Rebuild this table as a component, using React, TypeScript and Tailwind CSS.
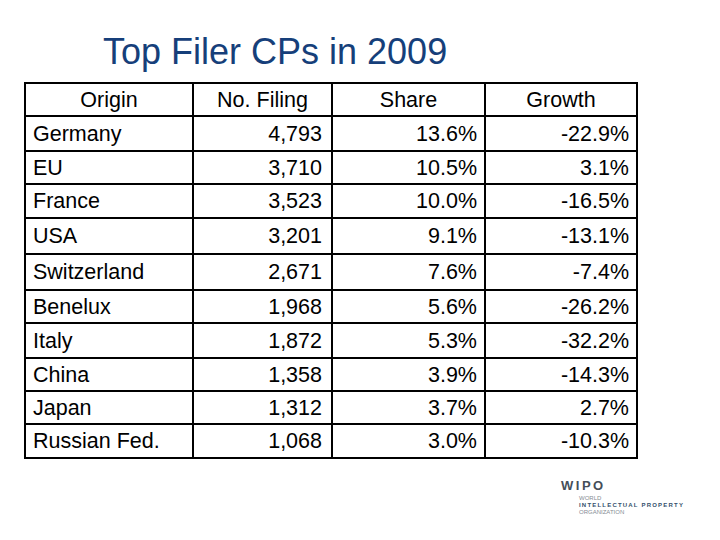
import { Fragment } from 'react'

const rows: [string, string, string, string][] = [
  ['Germany', '4,793', '13.6%', '-22.9%'],
  ['EU', '3,710', '10.5%', '3.1%'],
  ['France', '3,523', '10.0%', '-16.5%'],
  ['USA', '3,201', '9.1%', '-13.1%'],
  ['Switzerland', '2,671', '7.6%', '-7.4%'],
  ['Benelux', '1,968', '5.6%', '-26.2%'],
  ['Italy', '1,872', '5.3%', '-32.2%'],
  ['China', '1,358', '3.9%', '-14.3%'],
  ['Japan', '1,312', '3.7%', '2.7%'],
  ['Russian Fed.', '1,068', '3.0%', '-10.3%'],
]

const headers = ['Origin', 'No. Filing', 'Share', 'Growth']

function WipoLogo() {
  return (
    <div className="ml-[561px] mt-[20px] flex flex-col font-['Liberation_Sans',Arial,sans-serif]">
      <div className="text-[13px] font-bold leading-[13px] tracking-[2.5px] text-[#454e58]">WIPO</div>
      <div className="ml-[18px] mt-[3px] flex flex-col text-[6px] leading-[7px]">
        <span className="text-[#858c94]">WORLD</span>
        <span className="font-bold tracking-[1.2px] text-[#34506c]">INTELLECTUAL PROPERTY</span>
        <span className="text-[#858c94]">ORGANIZATION</span>
      </div>
    </div>
  )
}

export default function App() {
  return (
    <div className="flex h-[540px] w-[720px] flex-col bg-white font-['Liberation_Sans',Arial,sans-serif] text-black">
      <h1 className="ml-[103px] mt-[32px] h-[40px] text-[36px] leading-[40px] text-[#163f7a]">
        Top Filer CPs in 2009
      </h1>

      <div className="ml-[24px] mt-[10px] grid w-fit grid-cols-[166px_137px_151px_150px] grid-rows-[31px_33px_31px_32px_34px_34px_31px_33px_31px_31px_32px] gap-[2px] bg-black p-[2px] text-[21.5px] leading-[24px]">
        {headers.map((h) => (
          <div key={h} className="flex items-center justify-center bg-white">
            {h}
          </div>
        ))}
        {rows.map((r) => (
          <Fragment key={r[0]}>
            <div className="flex items-center bg-white pl-[7px]">{r[0]}</div>
            <div className="flex items-center justify-end bg-white pr-[9px]">{r[1]}</div>
            <div className="flex items-center justify-end bg-white pr-[7px]">{r[2]}</div>
            <div className="flex items-center justify-end bg-white pr-[7px]">{r[3]}</div>
          </Fragment>
        ))}
      </div>

      <WipoLogo />
    </div>
  )
}
